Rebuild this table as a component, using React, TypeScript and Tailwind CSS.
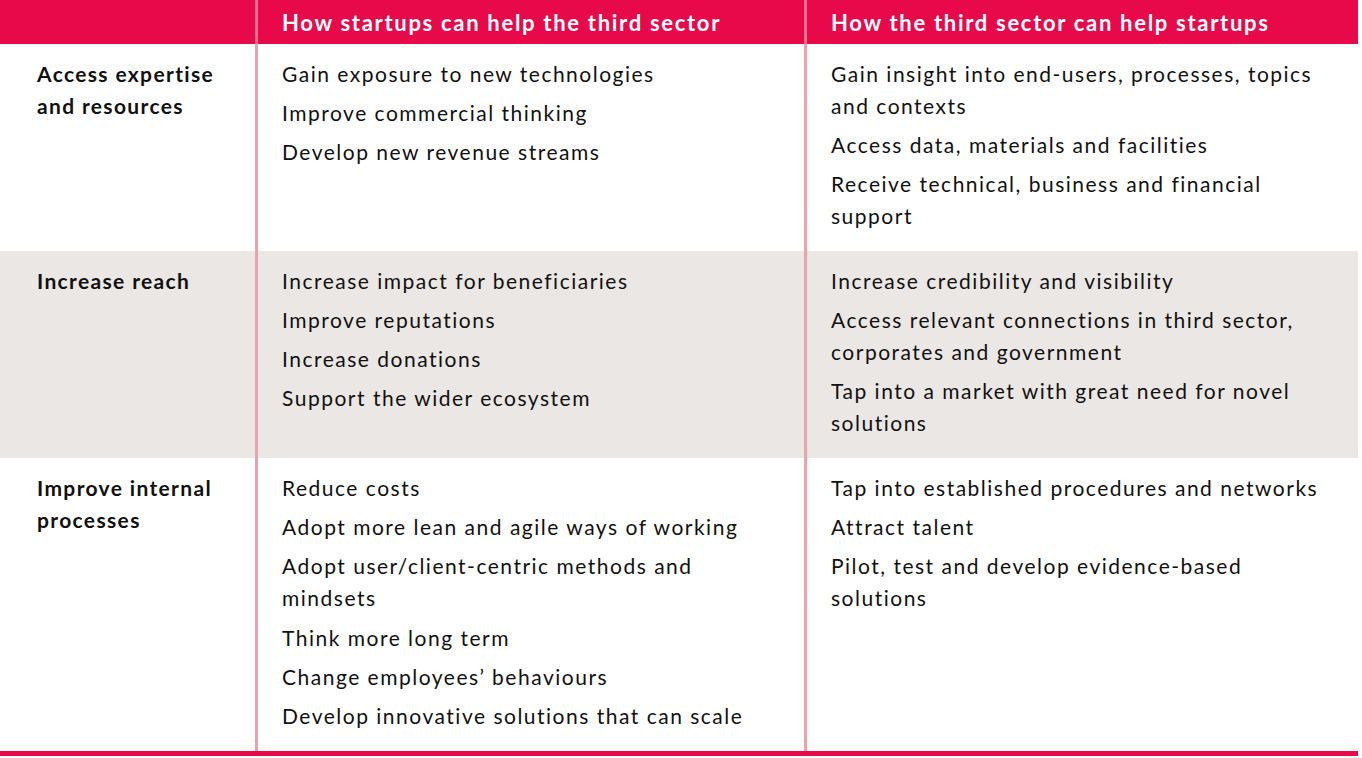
import React from "react";

const rows: { title: string[]; a: string[]; b: string[]; grey?: boolean }[] = [
  {
    title: ["Access expertise", "and resources"],
    a: [
      "Gain exposure to new technologies",
      "Improve commercial thinking",
      "Develop new revenue streams",
    ],
    b: [
      "Gain insight into end-users, processes, topics and contexts",
      "Access data, materials and facilities",
      "Receive technical, business and financial support",
    ],
  },
  {
    title: ["Increase reach"],
    grey: true,
    a: [
      "Increase impact for beneficiaries",
      "Improve reputations",
      "Increase donations",
      "Support the wider ecosystem",
    ],
    b: [
      "Increase credibility and visibility",
      "Access relevant connections in third sector, corporates and government",
      "Tap into a market with great need for novel solutions",
    ],
  },
  {
    title: ["Improve internal", "processes"],
    a: [
      "Reduce costs",
      "Adopt more lean and agile ways of working",
      "Adopt user/client-centric methods and mindsets",
      "Think more long term",
      "Change employees\u2019 behaviours",
      "Develop innovative solutions that can scale",
    ],
    b: [
      "Tap into established procedures and networks",
      "Attract talent",
      "Pilot, test and develop evidence-based solutions",
    ],
  },
];

export default function App() {
  return (
    <div
      className="w-[1362px] h-[758px] bg-white text-[#111111] [font-variant-ligatures:none]"
      style={{ fontFamily: "Lato, 'Noto Sans', sans-serif" }}
    >
      <div className="w-[1358px]">
        <div className="grid grid-cols-[255px_549px_1fr] bg-[#e8094a] h-[44px] text-white font-bold text-[22px] tracking-[1.7px]">
          <div />
          <div className="border-l-[3px] border-[#f0708f] pl-[24px] flex items-center">
            How startups can help the third sector
          </div>
          <div className="border-l-[3px] border-[#f0708f] pl-[24px] flex items-center">
            How the third sector can help startups
          </div>
        </div>
        {rows.map((r, i) => (
          <div
            key={i}
            className={`grid grid-cols-[255px_549px_1fr] text-[21px] leading-[32px] ${
              r.grey ? "bg-[#ebe7e4]" : "bg-white"
            }`}
          >
            <div className="pl-[37px] pt-[13.5px] font-bold tracking-[1.35px]">
              {r.title.map((t, j) => (
                <div key={j}>{t}</div>
              ))}
            </div>
            <div className="border-l-[3px] border-[#e8a3ad] pl-[24px] pt-[13.5px] pb-[19px] pr-[30px] tracking-[1.5px] flex flex-col gap-[7.3px]">
              {r.a.map((t, j) => (
                <div key={j}>{t}</div>
              ))}
            </div>
            <div className="border-l-[3px] border-[#e8a3ad] pl-[24px] pt-[13.5px] pb-[19px] pr-[28px] tracking-[1.5px] flex flex-col gap-[7.3px]">
              {r.b.map((t, j) => (
                <div key={j}>{t}</div>
              ))}
            </div>
          </div>
        ))}
        <div className="h-[5px] bg-[#e8094a]" />
      </div>
    </div>
  );
}
